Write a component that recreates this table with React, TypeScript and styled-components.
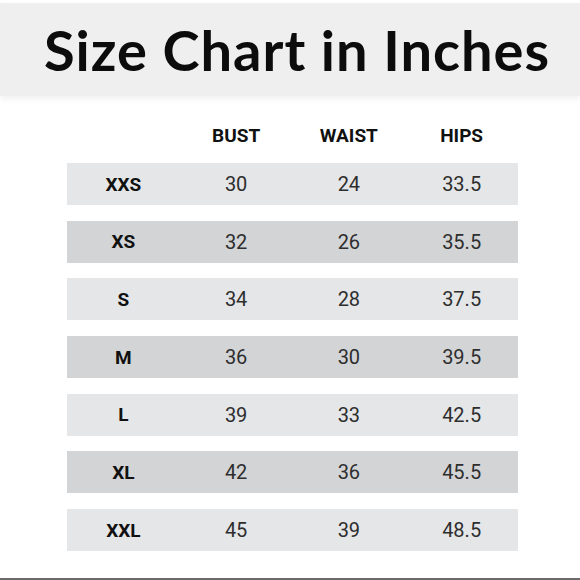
import * as React from "react";
import styled, { createGlobalStyle } from "styled-components";

const GlobalStyle = createGlobalStyle`
  html, body {
    margin: 0;
    padding: 0;
    background: #ffffff;
  }
  body {
    width: 580px;
    height: 580px;
    overflow: hidden;
    font-family: Roboto, "Liberation Sans", sans-serif;
  }
`;

const Page = styled.div`
  width: 580px;
  height: 580px;
  display: flex;
  flex-direction: column;
  box-sizing: border-box;
  padding-top: 3px;
  border-bottom: 2px solid #6a6a6a;
`;

const TitleBand = styled.header`
  height: 93px;
  background: #efefef;
  box-shadow: 0 3px 6px rgba(0, 0, 0, 0.06);
  display: flex;
  align-items: center;
  justify-content: center;
  padding-left: 14px;
`;

const Title = styled.h1`
  margin: 0;
  font-family: Lato, "Open Sans", sans-serif;
  font-weight: 700;
  font-size: 56px;
  letter-spacing: 1px;
  color: #0c0c0c;
  line-height: 1;
`;

const Table = styled.div`
  display: flex;
  flex-direction: column;
  gap: 15.7px;
  margin: 24px 0 0 67px;
  width: 451px;
`;

const Row = styled.div<{ $shade: "light" | "dark" }>`
  display: grid;
  grid-template-columns: repeat(4, 1fr);
  align-items: center;
  height: 42px;
  background: ${(p) => (p.$shade === "dark" ? "#d3d4d6" : "#e5e6e8")};
`;

const HeaderRow = styled.div`
  display: grid;
  grid-template-columns: repeat(4, 1fr);
  align-items: center;
  height: 30px;
  margin-bottom: -2.7px;
`;

const HeadCell = styled.div`
  text-align: center;
  font-size: 19px;
  font-weight: 700;
  color: #111;
`;

const SizeCell = styled.div`
  text-align: center;
  font-size: 19px;
  font-weight: 700;
  color: #111;
`;

const ValueCell = styled.div`
  text-align: center;
  font-size: 20px;
  font-weight: 400;
  color: #2e2e2e;
`;

const rows = [
  { size: "XXS", bust: "30", waist: "24", hips: "33.5" },
  { size: "XS", bust: "32", waist: "26", hips: "35.5" },
  { size: "S", bust: "34", waist: "28", hips: "37.5" },
  { size: "M", bust: "36", waist: "30", hips: "39.5" },
  { size: "L", bust: "39", waist: "33", hips: "42.5" },
  { size: "XL", bust: "42", waist: "36", hips: "45.5" },
  { size: "XXL", bust: "45", waist: "39", hips: "48.5" },
];

export default function App() {
  return (
    <>
      <GlobalStyle />
      <Page>
        <TitleBand>
          <Title>Size Chart in Inches</Title>
        </TitleBand>
        <Table>
          <HeaderRow>
            <HeadCell />
            <HeadCell>BUST</HeadCell>
            <HeadCell>WAIST</HeadCell>
            <HeadCell>HIPS</HeadCell>
          </HeaderRow>
          {rows.map((r, i) => (
            <Row key={r.size} $shade={i % 2 === 0 ? "light" : "dark"}>
              <SizeCell>{r.size}</SizeCell>
              <ValueCell>{r.bust}</ValueCell>
              <ValueCell>{r.waist}</ValueCell>
              <ValueCell>{r.hips}</ValueCell>
            </Row>
          ))}
        </Table>
      </Page>
    </>
  );
}
